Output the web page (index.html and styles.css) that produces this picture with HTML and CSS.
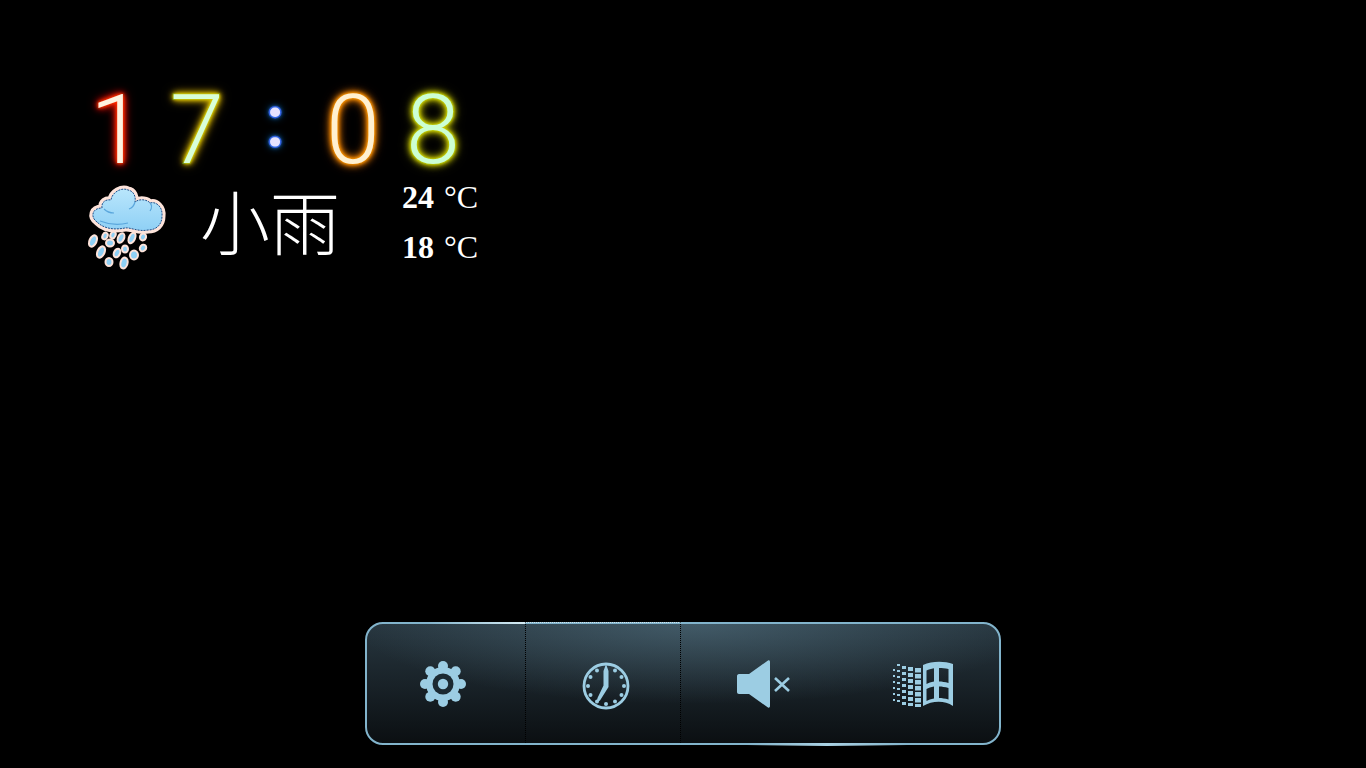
FILE: index.html
```html
<!DOCTYPE html>
<html lang="zh">
<head>
<meta charset="utf-8">
<title>Clock</title>
<link rel="stylesheet" href="styles.css">
</head>
<body>
<main class="screen">
  <section class="panel">
    <div class="clock">
      <span class="digit red">1</span>
      <span class="digit green">7</span>
      <span class="colon">:</span>
      <span class="digit orange">0</span>
      <span class="digit lime">8</span>
    </div>
    <div class="weather">
      <svg class="rain" viewBox="0 0 100 105" width="100" height="105">
        <defs>
          <linearGradient id="sky" x1="0" y1="0" x2="0" y2="1">
            <stop offset="0" stop-color="#b9e6fc"/>
            <stop offset="1" stop-color="#8fd0f5"/>
          </linearGradient>
        </defs>
        <g class="drops">
          <ellipse cx="13" cy="66" rx="3.5" ry="6" transform="rotate(25 13 66)"/>
          <ellipse cx="25" cy="61" rx="2.5" ry="3.5" transform="rotate(25 25 61)"/>
          <ellipse cx="33" cy="60" rx="2.5" ry="3.5" transform="rotate(25 33 60)"/>
          <ellipse cx="41" cy="63" rx="3" ry="5" transform="rotate(25 41 63)"/>
          <ellipse cx="52" cy="63" rx="3" ry="5.5" transform="rotate(25 52 63)"/>
          <ellipse cx="63" cy="62" rx="3" ry="3.5" transform="rotate(25 63 62)"/>
          <ellipse cx="21" cy="77" rx="3.5" ry="6" transform="rotate(25 21 77)"/>
          <ellipse cx="30" cy="68" rx="4" ry="3.5"/>
          <ellipse cx="45" cy="74" rx="3" ry="3.5"/>
          <ellipse cx="63" cy="73" rx="3" ry="3.5" transform="rotate(40 63 73)"/>
          <ellipse cx="37" cy="78" rx="3" ry="4.5" transform="rotate(25 37 78)"/>
          <ellipse cx="54" cy="80" rx="4" ry="4.5"/>
          <ellipse cx="29" cy="87" rx="3.5" ry="4"/>
          <ellipse cx="44" cy="88" rx="3.5" ry="5.5" transform="rotate(15 44 88)"/>
        </g>
        <path class="cloud-edge" d="M17 47C10 42 12 33 22 33C21 27 26 24 31 25C32 17 42 12 48 15C54 16 56 22 55 27C60 23 68 25 70 28C76 26 83 32 82 41C82 50 76 55 68 55C58 57 50 52 45 53C35 55 24 54 17 47Z"/>
        <path class="cloud-fill" d="M17 47C10 42 12 33 22 33C21 27 26 24 31 25C32 17 42 12 48 15C54 16 56 22 55 27C60 23 68 25 70 28C76 26 83 32 82 41C82 50 76 55 68 55C58 57 50 52 45 53C35 55 24 54 17 47Z"/>
        <path class="cloud-seam" d="M17 47C10 42 12 33 22 33C21 27 26 24 31 25C32 17 42 12 48 15C54 16 56 22 55 27C60 23 68 25 70 28C76 26 83 32 82 41C82 50 76 55 68 55C58 57 50 52 45 53C35 55 24 54 17 47Z"/>
        <path class="cloud-arc" d="M24 34C27 37 31 38 34 38M55 27C54 31 52 33 49 34M70 28C72 30 72 33 70 36M20 46C30 50 40 50 48 48"/>
      </svg>
      <span class="desc">小雨</span>
      <div class="temps">
        <div class="temp"><span class="num">24</span><span>°C</span></div>
        <div class="temp"><span class="num">18</span><span>°C</span></div>
      </div>
    </div>
  </section>

  <nav class="bar">
    <button class="cell cell-gear">
      <svg viewBox="0 0 48 48" width="48" height="48">
        <g class="ico">
          <circle cx="24" cy="24" r="17"/>
          <circle cx="24" cy="6" r="5"/>
          <circle cx="24" cy="42" r="5"/>
          <circle cx="6" cy="24" r="5"/>
          <circle cx="42" cy="24" r="5"/>
          <circle cx="11.3" cy="11.3" r="5"/>
          <circle cx="36.7" cy="11.3" r="5"/>
          <circle cx="11.3" cy="36.7" r="5"/>
          <circle cx="36.7" cy="36.7" r="5"/>
        </g>
        <circle class="hole" cx="24" cy="24" r="10.5"/>
        <circle class="ico" cx="24" cy="24" r="5.2"/>
      </svg>
    </button>
    <button class="cell cell-clock">
      <svg viewBox="0 0 48 48" width="48" height="48">
        <circle class="ring" cx="24" cy="24" r="22"/>
        <g class="ico">
          <circle cx="24" cy="42" r="2"/>
          <circle cx="33" cy="8.5" r="2"/>
          <circle cx="39.5" cy="15" r="2"/>
          <circle cx="42" cy="24" r="2"/>
          <circle cx="39.5" cy="33" r="2"/>
          <circle cx="33" cy="39.5" r="2"/>
          <circle cx="15" cy="39.5" r="2"/>
          <circle cx="8.5" cy="33" r="2"/>
          <circle cx="6" cy="24" r="2"/>
          <circle cx="8.5" cy="15" r="2"/>
          <circle cx="15" cy="8.5" r="2"/>
          <path d="M24 2L26.5 9V25L18 38.5L14.5 40.5L15.5 36L21.5 23.5V9Z"/>
        </g>
      </svg>
    </button>
    <button class="cell cell-sound">
      <svg viewBox="0 0 54 48" width="54" height="48">
        <path class="ico" d="M2 14H12L31 0.5C32 0 33 0.5 33 2V46C33 47.5 32 48 31 47.5L12 34H2C0.8 34 0 33 0 32V16C0 15 0.8 14 2 14Z"/>
        <path class="cross" d="M38 18L52 31M52 18L38 31"/>
      </svg>
    </button>
    <button class="cell cell-win">
      <svg viewBox="0 0 62 48" width="62" height="48">
        <path class="ico" fill-rule="evenodd" d="M31 5C40 1 52 1 61 4V46C52 40 40 41 31 46ZM34.5 10.5C36.5 9.5 39 8.8 42 8.3V21.5C39 22 36.5 22.8 34.5 24ZM47 8C50 8 53 8.3 56.5 9V23C53 22 50 21.5 47 21.5ZM34.5 29C36.5 28 39 27 42 26.5V38.5C39 39 36.5 40 34.5 41ZM47 26.5C50 26.5 53 27 56.5 28V39.5C53 38.5 50 38 47 38Z"/>
        <g class="ico">
          <rect x="23" y="8" width="6" height="4.5"/><rect x="23" y="14" width="6" height="4.5"/><rect x="23" y="20" width="6" height="4.5"/><rect x="23" y="26" width="6" height="4.5"/><rect x="23" y="32" width="6" height="4.5"/><rect x="23" y="38" width="6" height="4.5"/><rect x="23" y="44" width="6" height="3"/>
          <rect x="16" y="7" width="5" height="4"/><rect x="16" y="13" width="5" height="4"/><rect x="16" y="19" width="5" height="4"/><rect x="16" y="25" width="5" height="4"/><rect x="16" y="31" width="5" height="4"/><rect x="16" y="37" width="5" height="4"/><rect x="16" y="43" width="5" height="3"/>
          <rect x="10" y="6" width="4" height="3"/><rect x="10" y="12" width="4" height="3"/><rect x="10" y="18" width="4" height="3"/><rect x="10" y="24" width="4" height="3"/><rect x="10" y="30" width="4" height="3"/><rect x="10" y="36" width="4" height="3"/><rect x="10" y="42" width="4" height="3"/>
          <rect x="5" y="4" width="3" height="2"/><rect x="5" y="10" width="3" height="2"/><rect x="5" y="16" width="3" height="2"/><rect x="5" y="22" width="3" height="2"/><rect x="5" y="28" width="3" height="2"/><rect x="5" y="34" width="3" height="2"/><rect x="5" y="40" width="3" height="2"/>
          <rect x="1" y="9" width="2" height="2"/><rect x="1" y="15" width="2" height="2"/><rect x="1" y="21" width="2" height="2"/><rect x="1" y="27" width="2" height="2"/><rect x="1" y="33" width="2" height="2"/><rect x="1" y="39" width="2" height="2"/>
        </g>
      </svg>
    </button>
  </nav>
</main>
</body>
</html>
```

FILE: styles.css
```css
html, body {
  margin: 0;
  height: 100%;
  background: #000;
  overflow: hidden;
}

.screen {
  height: 768px;
  display: flex;
  flex-direction: column;
  justify-content: space-between;
}

.panel {
  padding: 84px 0 0 77px;
}

/* Neon clock */
.clock {
  display: flex;
  height: 92px;
  align-items: center;
}

.digit {
  width: 80px;
  text-align: center;
  font-family: Roboto, sans-serif;
  font-weight: 300;
  font-size: 97px;
  line-height: 92px;
  -webkit-text-stroke: 2px #0a0a0a;
  paint-order: stroke fill;
}

.red {
  color: #fff3e0;
  text-shadow: 0 0 3px #f30, 0 0 4px #f30, 0 0 6px #f20, 0 0 8px #e10, 0 0 12px #c10;
}
.green {
  color: #d8ffd8;
  -webkit-text-stroke-color: #063;
  text-shadow: 0 0 3px #dc0, 0 0 4px #dc0, 0 0 6px #db0, 0 0 8px #ca0, 0 0 12px #a80;
}
.orange {
  color: #fff0d0;
  text-shadow: 0 0 3px #f90, 0 0 4px #f90, 0 0 6px #f80, 0 0 8px #d70, 0 0 12px #a50;
}
.lime {
  color: #ccffd4;
  -webkit-text-stroke-color: #063;
  text-shadow: 0 0 3px #cc0, 0 0 4px #cc0, 0 0 6px #cc0, 0 0 8px #aa0, 0 0 12px #880;
}

.colon {
  width: 76px;
  margin-bottom: 18px;
  text-align: center;
  font-family: Roboto, sans-serif;
  font-weight: 500;
  font-size: 73px;
  line-height: 78px;
  color: #e6e2ff;
  -webkit-text-stroke: 3px #4a30c8;
  paint-order: stroke fill;
  text-shadow: 0 0 3px #38f, 0 0 5px #28f, 0 0 8px #17c;
}

/* Weather */
.weather {
  display: flex;
  align-items: center;
  margin: -1px 0 0 3px;
  height: 105px;
}

.rain {
  flex: none;
}

.drops ellipse {
  fill: #8fd0f5;
  stroke: #fde3da;
  stroke-width: 2;
}

.cloud-edge {
  fill: none;
  stroke: #fde3da;
  stroke-width: 7;
}

.cloud-fill {
  fill: url(#sky);
}

.cloud-seam {
  fill: none;
  stroke: #1c4f8c;
  stroke-width: 1;
  stroke-dasharray: 2 1;
}

.cloud-arc {
  fill: none;
  stroke: #5aa6dc;
  stroke-width: 1.2;
}

.desc {
  margin: 0 0 16px 20px;
  width: 202px;
  font-family: "Noto Sans CJK SC", sans-serif;
  font-weight: 300;
  font-size: 70px;
  line-height: 80px;
  color: #fff;
}

.temps {
  display: flex;
  flex-direction: column;
  gap: 10px;
  margin-bottom: 12px;
  font-family: "Liberation Serif", serif;
  font-size: 32px;
  line-height: 40px;
  color: #fff;
  white-space: nowrap;
}

.temp {
  display: flex;
  gap: 10px;
}

.num {
  font-weight: 700;
}

/* Bottom bar */
.bar {
  position: relative;
  box-sizing: border-box;
  display: flex;
  width: 636px;
  height: 123px;
  margin: 0 0 23px 365px;
  border: 2.5px solid #82b4cc;
  border-radius: 18px;
  background:
    radial-gradient(ellipse 340px 80px at 52% 0, rgba(110, 150, 170, .38), rgba(110, 150, 170, 0)),
    linear-gradient(#27363f, #0b0f12);
}

.bar::before {
  content: "";
  position: absolute;
  top: -2.5px;
  left: 60px;
  width: 98px;
  height: 2.5px;
  background: linear-gradient(90deg, rgba(214, 236, 244, 0), #d6ecf4);
}

.bar::after {
  content: "";
  position: absolute;
  bottom: -2.5px;
  left: 380px;
  width: 160px;
  height: 2.5px;
  background: linear-gradient(90deg, rgba(170, 210, 228, 0), #aad2e4, rgba(170, 210, 228, 0));
}

.cell {
  box-sizing: border-box;
  display: flex;
  align-items: center;
  justify-content: center;
  padding: 0;
  border: 0;
  background: none;
}

.cell-gear { width: 158px; padding-right: 7px; }
.cell-clock {
  width: 156px;
  margin-top: -2px;
  padding: 6px 0 0 6px;
  border-top: 1px dotted #cfe4ee;
  border-left: 1px dotted #000;
  border-right: 1px dotted #000;
}
.cell-sound { width: 161px; padding-left: 4px; }
.cell-win { flex: 1; padding-left: 5px; }

.ico { fill: #9ccde3; }
.hole { fill: #1c2a32; }
.ring { fill: none; stroke: #9ccde3; stroke-width: 2.8; }
.cross { fill: none; stroke: #9ccde3; stroke-width: 2.6; }
```
